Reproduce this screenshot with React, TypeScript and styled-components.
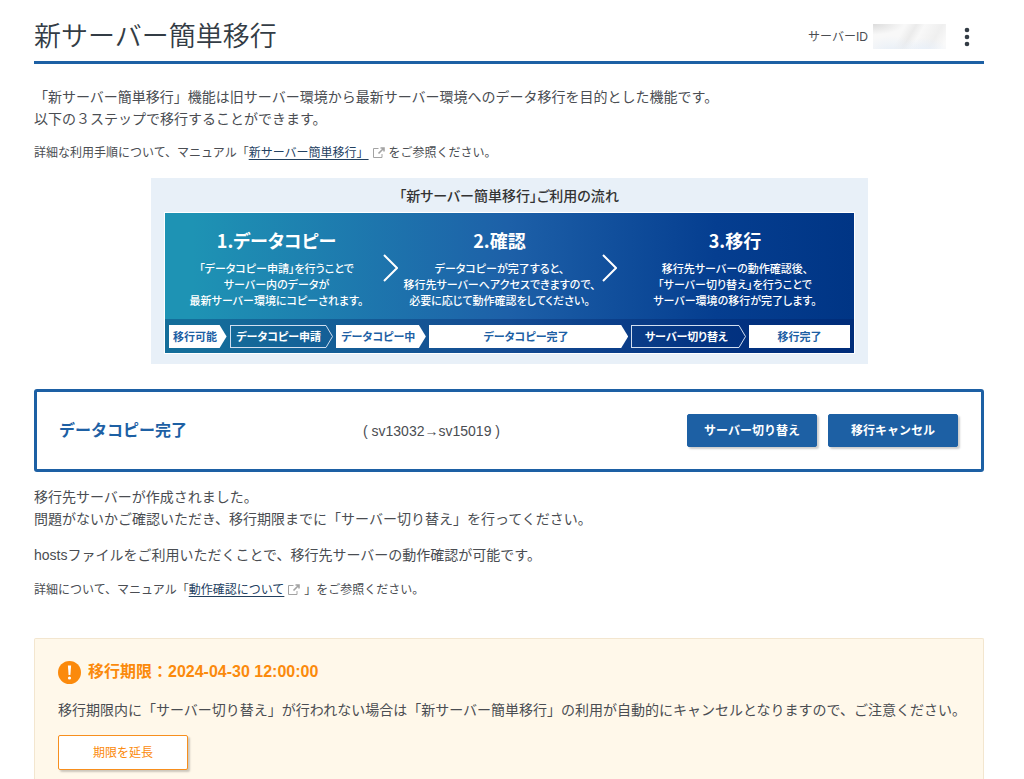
import React from "react";
import styled, { createGlobalStyle, css } from "styled-components";

const GlobalStyle = createGlobalStyle`
  *, *::before, *::after { box-sizing: border-box; }
  body {
    margin: 0;
    background: #fff;
    color: #4a4d52;
    font-family: "Liberation Sans", "Noto Sans CJK JP", sans-serif;
    font-size: 14px;
    line-height: 22px;
  }
  h1, h2, h3, p, ol { margin: 0; padding: 0; }
`;

const Page = styled.main`
  display: flex;
  flex-direction: column;
  min-height: 100vh;
  padding: 12px 40px 0 34px;
`;

const Header = styled.header`
  display: flex;
  align-items: center;
  justify-content: space-between;
  height: 52px;
  border-bottom: 3px solid #1d60a4;
`;

const PageTitle = styled.h1`
  color: #333c45;
  font-size: 27px;
  font-weight: 350;
  line-height: 40px;
`;

const ServerInfo = styled.div`
  display: flex;
  align-items: center;
  padding-right: 13px;
  font-size: 12px;
`;

const MaskedId = styled.span`
  width: 73px;
  height: 25px;
  margin-left: 5px;
  background:
    radial-gradient(ellipse at 0 0, #dcdcdc 0, transparent 30%),
    radial-gradient(ellipse at 25% 110%, #e8eff7 0, transparent 40%),
    radial-gradient(ellipse at 70% 110%, #e8f0fa 0, transparent 35%),
    linear-gradient(120deg, #f8f8f8 38%, #ebebeb 50%, #f8f8f8 60%, #efefef 80%, #fafafa 95%);
`;

const MenuButton = styled.button`
  display: flex;
  margin-left: 17px;
  padding: 0;
  border: 0;
  background: none;
  color: #333c45;
`;

const Text = styled.p<{ $small?: boolean; $top: number }>`
  margin-top: ${(p) => p.$top}px;
  font-size: ${(p) => (p.$small ? 12 : 14)}px;
  white-space: nowrap;
`;

const ManualLink = styled.a`
  color: #22405f;
  text-decoration: underline;
  text-underline-offset: 2px;
`;

const LinkIcon = styled.svg`
  margin: 0 4px;
  vertical-align: -1px;
`;

const Flow = styled.section`
  align-self: center;
  width: 100%;
  max-width: 717px;
  margin-top: 14px;
  padding: 5px 13px 10px;
  background: #e8f0f8;
  font-family: "Noto Sans CJK JP", sans-serif;
  font-feature-settings: "palt";
`;

const FlowTitle = styled.h2`
  color: #333;
  font-size: 14px;
  font-weight: 500;
  line-height: 24px;
  text-align: center;
`;

const FlowPanel = styled.div`
  margin-top: 5px;
  border: 1px solid #fff;
  background: linear-gradient(90deg, #1e93b4 4%, #1d60a8 50%, #053e90 80%, #003585 100%);
  color: #fff;
`;

const Steps = styled.div`
  display: grid;
  grid-template-columns: 212fr 15px 204fr 15px 237fr;
  height: 106px;
  padding: 12px 0 0 6px;
`;

const Step = styled.div`
  text-align: center;
  white-space: nowrap;
`;

const StepTitle = styled.h3`
  margin-bottom: 5px;
  font-size: 18px;
  font-weight: 700;
  line-height: 30px;
`;

const StepText = styled.p`
  font-size: 11px;
  font-weight: 500;
  line-height: 16px;
`;

const Chevron = styled.svg`
  margin-top: 29px;
`;

const Stages = styled.ol`
  display: flex;
  gap: 3px;
  padding: 6px 4px 5px;
  background: rgba(0, 25, 95, 0.3);
  list-style: none;
`;

const StageItem = styled.li<{ $grow: number; $outlined?: boolean }>`
  display: grid;
  flex: ${(p) => p.$grow} 1 0;
  height: 23px;
  color: ${(p) => (p.$outlined ? "#fff" : "#1d60a4")};
  font-size: 11px;
  font-weight: 700;
  line-height: 22px;
  text-align: center;
  white-space: nowrap;

  > * { grid-area: 1 / 1; }
`;

const StageShape = styled.span<{ $outlined?: boolean; $square?: boolean }>`
  display: flex;
  background: ${(p) => (p.$outlined ? "transparent" : "#fff")};
  ${(p) => p.$outlined && css`
    margin-right: 7px;
    border: 1px solid #d2dff0;
    border-right: 0;
  `}
  ${(p) => !p.$outlined && !p.$square && css`
    clip-path: polygon(0 0, calc(100% - 7px) 0, 100% 50%, calc(100% - 7px) 100%, 0 100%);
  `}
`;

const StageTip = styled.svg`
  justify-self: end;
`;

const StageLabel = styled.span<{ $square?: boolean }>`
  z-index: 1;
  padding-right: ${(p) => (p.$square ? 0 : 5)}px;
`;

const StatusBox = styled.section`
  display: flex;
  align-items: center;
  height: 83px;
  margin-top: 25px;
  padding: 0 23px 0 22px;
  border: 3px solid #1d60a4;
  border-radius: 3px;
`;

const StatusName = styled.h2`
  flex: 0 0 304px;
  color: #1d60a4;
  font-size: 16px;
  font-weight: 700;
`;

const Actions = styled.div`
  display: flex;
  gap: 11px;
  margin-left: auto;
`;

const Button = styled.button<{ $outline?: boolean }>`
  width: 130px;
  height: ${(p) => (p.$outline ? 35 : 33)}px;
  padding: 0 0 2px;
  border: 1px solid ${(p) => (p.$outline ? "#f78f1e" : "#1d60a4")};
  border-radius: 2px;
  background: ${(p) => (p.$outline ? "#fff" : "#1d60a4")};
  box-shadow: 2px 2px 2px rgba(0, 0, 0, 0.2);
  color: ${(p) => (p.$outline ? "#fb8a0c" : "#fff")};
  font-family: inherit;
  font-size: 12px;
  font-weight: ${(p) => (p.$outline ? 400 : 700)};
`;

const Notice = styled.section`
  flex: 1;
  margin-top: 37px;
  padding: 21px 0 8px 23px;
  border: 1px solid #f3e6cf;
  border-bottom: 0;
  border-radius: 2px 2px 0 0;
  background: #fff8ea;
`;

const NoticeTitle = styled.h2`
  display: flex;
  align-items: center;
  gap: 7px;
  color: #fb8a0c;
  font-size: 16px;
  font-weight: 700;
  line-height: 24px;
`;

const NoticeText = styled(Text)`
  margin-bottom: 14px;
`;

const ExternalIcon = () => (
  <LinkIcon width="12" height="11" viewBox="0 0 12 11" fill="none" stroke="#a3a3a3" aria-hidden="true">
    <path d="M5.500 1.500h-5v9h8.500v-3.500" />
    <path d="M7.500 1h3.500v3.500M10.500 1.500L5.500 6.500" strokeWidth="1.600" />
  </LinkIcon>
);

const StepArrow = () => (
  <Chevron width="15" height="28" viewBox="0 0 15 28" fill="none" stroke="#fff" strokeWidth="2" aria-hidden="true">
    <path d="M1 1l13 13L1 27" />
  </Chevron>
);

const steps = [
  {
    title: "1.データコピー",
    lines: ["「データコピー申請」を行うことで", "サーバー内のデータが", "最新サーバー環境にコピーされます。"],
  },
  {
    title: "2.確認",
    lines: ["データコピーが完了すると、", "移行先サーバーへアクセスできますので、", "必要に応じて動作確認をしてください。"],
  },
  {
    title: "3.移行",
    lines: ["移行先サーバーの動作確認後、", "「サーバー切り替え」を行うことで", "サーバー環境の移行が完了します。"],
  },
];

const stages = [
  { label: "移行可能", grow: 58 },
  { label: "データコピー申請", grow: 103, outlined: true },
  { label: "データコピー中", grow: 90 },
  { label: "データコピー完了", grow: 199 },
  { label: "サーバー切り替え", grow: 115, outlined: true },
  { label: "移行完了", grow: 100, square: true },
];

export default function App() {
  return (
    <>
      <GlobalStyle />
      <Page lang="ja">
        <Header>
          <PageTitle>新サーバー簡単移行</PageTitle>
          <ServerInfo>
            サーバーID
            <MaskedId />
            <MenuButton type="button" aria-label="メニュー">
              <svg width="8" height="20" viewBox="0 0 8 20" fill="currentColor">
                <circle cx="4" cy="3" r="2.300" />
                <circle cx="4" cy="10" r="2.300" />
                <circle cx="4" cy="17" r="2.300" />
              </svg>
            </MenuButton>
          </ServerInfo>
        </Header>

        <Text $top={22}>
          「新サーバー簡単移行」機能は旧サーバー環境から最新サーバー環境へのデータ移行を目的とした機能です。
          <br />
          以下の３ステップで移行することができます。
        </Text>
        <Text $small $top={12}>
          詳細な利用手順について、マニュアル「
          <ManualLink href="#manual">新サーバー簡単移行」</ManualLink>
          <ExternalIcon />
          をご参照ください。
        </Text>

        <Flow>
          <FlowTitle>「新サーバー簡単移行」ご利用の流れ</FlowTitle>
          <FlowPanel>
            <Steps>
              {steps.map((step, i) => (
                <React.Fragment key={step.title}>
                  {i > 0 && <StepArrow />}
                  <Step>
                    <StepTitle>{step.title}</StepTitle>
                    {step.lines.map((line) => (
                      <StepText key={line}>{line}</StepText>
                    ))}
                  </Step>
                </React.Fragment>
              ))}
            </Steps>
            <Stages>
              {stages.map((s) => (
                <StageItem key={s.label} $grow={s.grow} $outlined={s.outlined}>
                  <StageShape $outlined={s.outlined} $square={s.square} />
                  {s.outlined && (
                    <StageTip width="8" height="23" viewBox="0 0 8 23" fill="none" stroke="#d2dff0" aria-hidden="true">
                      <path d="M0 .5h1L7.500 11.500L1 22.500H0" />
                    </StageTip>
                  )}
                  <StageLabel $square={s.square}>{s.label}</StageLabel>
                </StageItem>
              ))}
            </Stages>
          </FlowPanel>
        </Flow>

        <StatusBox>
          <StatusName>データコピー完了</StatusName>
          <span>( sv13032→sv15019 )</span>
          <Actions>
            <Button type="button">サーバー切り替え</Button>
            <Button type="button">移行キャンセル</Button>
          </Actions>
        </StatusBox>

        <Text $top={14}>
          移行先サーバーが作成されました。
          <br />
          問題がないかご確認いただき、移行期限までに「サーバー切り替え」を行ってください。
        </Text>
        <Text $top={14}>hostsファイルをご利用いただくことで、移行先サーバーの動作確認が可能です。</Text>
        <Text $small $top={13}>
          詳細について、マニュアル「
          <ManualLink href="#check">動作確認について</ManualLink>
          <ExternalIcon />
          」をご参照ください。
        </Text>

        <Notice>
          <NoticeTitle>
            <svg width="23" height="23" viewBox="0 0 23 23" aria-hidden="true">
              <circle cx="11.500" cy="11.500" r="11.500" fill="#fb8a0c" />
              <path d="M9.900 4.500h3.200l-.7 9.500h-1.800z" fill="#fff" />
              <circle cx="11.500" cy="17" r="1.600" fill="#fff" />
            </svg>
            <span>移行期限：2024-04-30 12:00:00</span>
          </NoticeTitle>
          <NoticeText $top={15}>
            移行期限内に「サーバー切り替え」が行われない場合は「新サーバー簡単移行」の利用が自動的にキャンセルとなりますので、ご注意ください。
          </NoticeText>
          <Button type="button" $outline>
            期限を延長
          </Button>
        </Notice>
      </Page>
    </>
  );
}
